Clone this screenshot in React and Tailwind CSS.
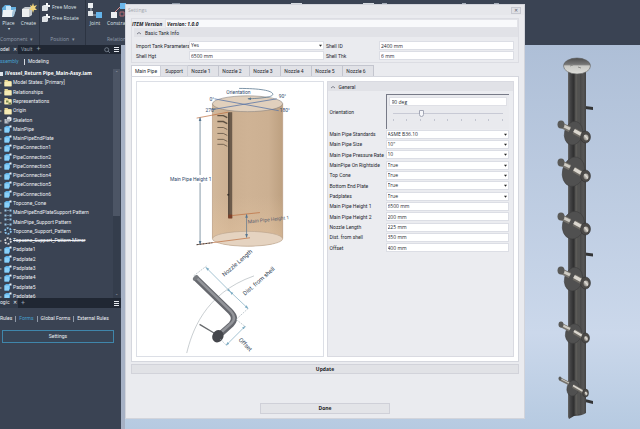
import React from "react";

const treeItems = [
  ["folder", "Model States: [Primary]"],
  ["folder", "Relationships"],
  ["reps", "Representations"],
  ["folder", "Origin"],
  ["skeleton", "Skeleton"],
  ["part", "MainPipe"],
  ["part", "MainPipeEndPlate"],
  ["part", "PipeConnection1"],
  ["part", "PipeConnection2"],
  ["part", "PipeConnection3"],
  ["part", "PipeConnection4"],
  ["part", "PipeConnection5"],
  ["part", "PipeConnection6"],
  ["part", "Topcone_Cone"],
  ["pattern", "MainPipeEndPlateSupport Pattern"],
  ["pattern", "MainPipe_Support Pattern"],
  ["circular", "Topcone_Support_Pattern"],
  ["suppressed", "Topcone_Support_Pattern-Mirror"],
  ["part", "Padplate1"],
  ["part", "Padplate2"],
  ["part", "Padplate3"],
  ["part", "Padplate4"],
  ["part", "Padplate5"],
  ["part", "Padplate6"],
];

const generalFields = [
  ["Main Pipe Standards", "ASME B36.10", true],
  ["Main Pipe Size", '10"', true],
  ["Main Pipe Pressure Rate", "10", true],
  ["MainPipe On Rightside", "True", true],
  ["Top Cone", "True", true],
  ["Bottom End Plate", "True", true],
  ["Padplates", "True", true],
  ["Main Pipe Height 1", "6500 mm", false],
  ["Main Pipe Height 2", "200 mm", false],
  ["Nozzle Length", "225 mm", false],
  ["Dist. from shell", "350 mm", false],
  ["Offset", "400 mm", false],
];

const nozzles = [
  { x: 561, y: 125, dx: 24, dy: 12, rx: 9, ry: 12, s: 6 },
  { x: 561, y: 163, dx: 24, dy: 13, rx: 11, ry: 15, s: 6 },
  { x: 561, y: 217, dx: 24, dy: 12, rx: 11, ry: 14, s: 6 },
  { x: 561, y: 271, dx: 24, dy: 12, rx: 9, ry: 12, s: 6 },
  { x: 561, y: 325, dx: 24, dy: 13, rx: 8, ry: 10, s: 5 },
  { x: 560, y: 379, dx: 25, dy: 14, rx: 6, ry: 8, s: 4 },
];

function TreeIcon({ kind }) {
  return (
    <svg viewBox="0 0 8 8" className="h-2 w-2 shrink-0">
      {(kind === "folder" || kind === "reps") && (
        <>
          <path d="M0.5 1h3l.8 1h3.2v5.3h-7z" fill="#e8d795" />
          <path d="M0.5 3h7v4.3h-7z" fill="#f6ebb5" />
          {kind === "reps" && <path d="M2 3.5h2.5v2H2zM4.5 5.5H7v2H4.5z" fill="#74834f" />}
        </>
      )}
      {kind === "part" && (
        <>
          <path d="M0.5 2.5L2 1h4v4.5L5 7.5H0.5z" fill="#5aaee6" />
          <path d="M0.5 2.5H5v5H0.5z" fill="#8bd0f8" />
          <path d="M5.500 .5h2V2.500h-2z" fill="#eef4f8" />
        </>
      )}
      {kind === "skeleton" && (
        <>
          <path d="M0.5 3h4v4.5h-4z" fill="#b9bec6" />
          <path d="M3 1.5L5 .5l2.5 1v3L5 6 3 4.5z" fill="#e4e7ea" />
          <path d="M2 4h4M3 6h3" stroke="#59616e" strokeWidth=".7" />
        </>
      )}
      {kind === "pattern" && (
        <path d="M.5 .5h2v2h-2zM5.5 .5h2v2h-2zM.5 5.5h2v2h-2zM5.5 5.5h2v2h-2zM3.5 1h1v1h-1zM3.5 6h1v1h-1z" fill="#9bc7e6" />
      )}
      {(kind === "circular" || kind === "suppressed") && (
        <circle cx="4" cy="4" r="2.9" fill="none" strokeWidth="1.8" strokeDasharray="1.9 1.1" stroke={kind === "circular" ? "#8cc3ea" : "#d6d8db"} />
      )}
    </svg>
  );
}

function Menu() {
  return (
    <svg viewBox="0 0 5 5" className="h-[5px] w-[5px]">
      <path d="M0 .5h5M0 2.5h5M0 4.5h5" stroke="#e4e8ee" />
    </svg>
  );
}

function Ribbon() {
  return (
    <header className="flex h-[45px] shrink-0 overflow-hidden bg-[#3a4353] text-[5px] leading-[8px] text-[#dfe3e9]">
      <section className="flex w-[40px] shrink-0 flex-col justify-between border-r border-[#2c3442]">
        <div className="flex gap-[3px]">
          <button className="flex w-[17px] flex-col items-center">
            <svg viewBox="0 0 16 16" className="mt-[3px] h-4 w-4">
              <path d="M1 5l3-3h5l1 2h5v3L12 14H2z" fill="#64afe0" />
              <path d="M2 7h10l-1 7H1z" fill="#eef3f6" />
              <path d="M5 3h5v4H5z" fill="#c9e6f8" />
              <path d="M12 7l3-1-2 7-2 1z" fill="#a9c5d7" />
            </svg>
            Place
            <span className="text-[4px] leading-[4px]">▾</span>
          </button>
          <button className="flex w-[17px] flex-col items-center">
            <svg viewBox="0 0 16 16" className="mt-[3px] h-4 w-4">
              <path d="M1 6l3-2h7v8l-3 2H1z" fill="#c4c9ce" />
              <path d="M1 6h7v8H1z" fill="#eceeef" />
              <path d="M12 0l1 3 3-1-2 3 2 2-3 0-1 3-1-3-3 0 2-2-1-3 2 1z" fill="#f0d37a" />
            </svg>
            Create
          </button>
        </div>
        <div className="pb-0.5 whitespace-nowrap text-[#929cab]">Component &nbsp;▾</div>
      </section>
      <section className="flex w-[46px] shrink-0 flex-col justify-between border-r border-[#2c3442]">
        <div className="flex flex-col gap-[3px] pt-[3px] pl-0.5">
          {["Free Move", "Free Rotate"].map((t) => (
            <button key={t} className="flex items-center gap-0.5 whitespace-nowrap">
              <svg viewBox="0 0 8 8" className="h-2 w-2 shrink-0">
                <path d="M0 3l2-1h4v5l-1 1H0z" fill="#dfe3e7" />
                <path d="M4 0h2v2h2v2H6V3H4z" fill="#f8fafb" />
              </svg>
              {t}
            </button>
          ))}
        </div>
        <div className="pb-0.5 text-center text-[#929cab]">Position &nbsp;▾</div>
      </section>
      <section className="flex w-[86px] shrink-0 flex-col justify-between overflow-hidden">
        <div className="flex gap-1 pt-[3px] pl-px">
          <button className="flex flex-col items-center">
            <svg viewBox="0 0 16 16" className="h-4 w-4">
              <path d="M4 5v7h7" fill="none" stroke="#aeb9c6" />
              <path d="M1 0h5v5H1z" fill="#eceff2" />
              <path d="M9 9h6v6H9z" fill="#64b4ea" />
              <path d="M1 8h5v5H1z" fill="#dfe3e7" />
            </svg>
            Joint
          </button>
          <button className="flex flex-col items-center">
            <svg viewBox="0 0 16 16" className="h-4 w-4">
              <path d="M4 10l7-7" stroke="#d68b8b" />
              <path d="M10 0h6v6h-6z" fill="#6ab6ea" />
              <path d="M1 9h6v6H1z" fill="#eceff2" />
              <path d="M10 9h4v4h-4z" fill="none" stroke="#b46b73" />
            </svg>
            Constrain
          </button>
        </div>
        <div className="pb-0.5 pl-[21px] text-[#929cab]">Relationships ▾</div>
      </section>
      <div className="flex items-start pt-[3px]">
        <span className="h-4 w-2 bg-[#8d97a5]" />
        <span className="ml-[111px] h-4 w-[11px] bg-[#d5dae0]" />
        <span className="ml-[61px] h-4 w-[11px] bg-[#d5dae0]" />
        <span className="ml-2 h-4 w-[5px] bg-[#a5adb9]" />
        <span className="ml-[75px] h-4 w-1 bg-[#a5adb9]" />
        <span className="ml-[28px] h-4 w-[5px] bg-[#a5adb9]" />
      </div>
    </header>
  );
}

function ModelBrowser() {
  return (
    <aside className="flex w-[121px] shrink-0 flex-col overflow-hidden bg-[#3a4353] font-[Roboto,sans-serif] text-[#eef0f4]">
      <div className="flex h-[9px] shrink-0 items-center bg-[#202733] text-[5px]">
        <span className="flex h-full w-[18px] items-center gap-[3px] bg-[#313a49]">
          <span>odel</span><span>✕</span>
        </span>
        <span className="pl-[3px] text-[#98a2b0]">Vault</span>
        <span className="flex-1 pl-1 text-[7px] text-[#98a2b0]">+</span>
        <svg viewBox="0 0 6 6" className="mr-1 h-1.5 w-1.5"><circle cx="2.7" cy="2.7" r="2" fill="none" stroke="#8b96a5" strokeWidth=".7" /><path d="M4 4l2 2" stroke="#8b96a5" strokeWidth=".7" /></svg>
        <span className="pr-[2px]"><Menu /></span>
      </div>
      <nav className="flex h-[15px] shrink-0 items-center text-[5px]">
        <a href="#assembly" className="w-[21px] overflow-hidden text-[#45a0cf] underline underline-offset-2">ssembly</a>
        <span className="mx-[3px] h-[6px] w-px bg-[#d5dae1]" />
        <a href="#modeling">Modeling</a>
      </nav>
      <div className="flex h-[229px] shrink-0 overflow-hidden">
        <ul className="grid h-[232px] flex-1 grid-rows-[repeat(25,minmax(0,1fr))] text-[5px] leading-[9px] whitespace-nowrap">
          <li className="flex items-center gap-0.5 font-['Open_Sans',sans-serif] font-bold text-white">
            <span className="h-1 w-[3px] bg-[#dfe3e9]" />iVessel_Return Pipe_Main-Assy.iam
          </li>
          {treeItems.map(([kind, name]) => (
            <li key={name} className="flex items-center gap-px">
              <span className="w-[3px] text-[4px] text-[#a0a9b6]">▸</span>
              <TreeIcon kind={kind} />
              <span className={kind === "suppressed" ? "line-through" : ""}>{name}</span>
            </li>
          ))}
        </ul>
        <div className="mr-px flex w-[7px] flex-col items-center justify-between bg-[#343d4c] text-[4px] leading-[8px]">
          <span className="flex h-[147px] w-full justify-center bg-[#4c5565] text-[#aab2be]">⌃</span>
          <span className="text-[#aab2be]">⌄</span>
        </div>
      </div>
      <div className="flex h-[10px] shrink-0 items-center bg-[#202733] text-[5px]">
        <span className="flex h-full w-[18px] items-center gap-[3px] bg-[#313a49]"><span>ogic</span><span>✕</span></span>
        <span className="flex-1 pl-[3px] text-[7px] text-[#98a2b0]">+</span>
        <span className="pr-[2px]"><Menu /></span>
      </div>
      <nav className="flex h-[22px] shrink-0 items-center text-[5px] whitespace-nowrap">
        <a href="#rules">Rules</a>
        <span className="mx-[3px] h-[6px] w-px bg-[#8f99a8]" />
        <a href="#forms" className="text-[#45a0cf]">Forms</a>
        <span className="mx-[3px] h-[6px] w-px bg-[#8f99a8]" />
        <a href="#global">Global Forms</a>
        <span className="mx-[3px] h-[6px] w-px bg-[#8f99a8]" />
        <a href="#external">External Rules</a>
      </nav>
      <button className="mr-[7px] ml-0.5 h-[13px] shrink-0 border border-[#3f86ab] bg-[#384556] text-[5px] leading-[11px]">Settings</button>
    </aside>
  );
}

function Vessel() {
  return (
    <svg viewBox="525 45 115 384" className="h-[384px] w-[115px] shrink-0">
      <defs>
        <linearGradient id="tube">
          <stop offset="0" stopColor="#686868" /><stop offset=".1" stopColor="#484849" /><stop offset=".3" stopColor="#303031" />
          <stop offset=".5" stopColor="#5a5956" /><stop offset=".6" stopColor="#434343" /><stop offset=".85" stopColor="#555" /><stop offset="1" stopColor="#434344" />
        </linearGradient>
        <linearGradient id="cap" x2="0" y2="1">
          <stop offset="0" stopColor="#4d4d4d" /><stop offset=".4" stopColor="#777" /><stop offset=".5" stopColor="#c9c9c5" /><stop offset="1" stopColor="#dededa" />
        </linearGradient>
        <linearGradient id="steel" x1="1" x2="0" y2="1">
          <stop offset="0" stopColor="#77736d" /><stop offset=".45" stopColor="#dedbd4" /><stop offset="1" stopColor="#55524e" />
        </linearGradient>
      </defs>
      <path d="M585 106l8 1v3l-8-1zM585 252.500l8 1v3l-8-1zM585 399l8 2v3l-8-2z" fill="#343536" />
      <path d="M568 71h18v342q-4 3-12 3l-5 3-1-2z" fill="url(#tube)" />
      <path d="M576 72v342M579 72v342" stroke="#706f6c" strokeWidth=".6" />
      <ellipse cx="577" cy="66" rx="13.500" ry="8" fill="url(#cap)" stroke="#5e5f60" strokeWidth=".6" />
      <path d="M570 66l3-1M578 67l3 1" stroke="#8c8c89" />
      {nozzles.map((n) => (
        <g key={n.y}>
          <ellipse cx={n.x + n.dx / 2 + 1} cy={n.y + n.dy / 2 + 2} rx={n.rx} ry={n.ry} transform={`rotate(14 ${n.x + n.dx / 2} ${n.y + n.dy / 2})`} fill="#505050" stroke="#3c3c3c" strokeWidth=".5" />
          <path d={`M${n.x} ${n.y}l9 4.500`} stroke="#77746e" strokeWidth={n.s - 0.5} />
          <path d={`M${n.x + 1} ${n.y}l8 4`} stroke="#cfccc4" strokeWidth={n.s - 3} />
          <ellipse cx={n.x} cy={n.y - 0.5} rx={n.s - 2.5} ry={n.s - 2} fill="#5a5a58" />
          <path d={`M${n.x + 13} ${n.y + n.dy / 2}L${n.x + n.dx} ${n.y + n.dy}`} stroke="#6d6a64" strokeWidth={n.s} />
          <path d={`M${n.x + 13} ${n.y + n.dy / 2 - 0.5}L${n.x + n.dx} ${n.y + n.dy - 0.5}`} stroke="#dbd7cf" strokeWidth={n.s - 2.5} />
          <ellipse cx={n.x + n.dx + 0.5} cy={n.y + n.dy} rx={n.s - 1} ry={n.s} fill="#4c4a48" stroke="#2f2f2f" strokeWidth=".5" />
          <ellipse cx={n.x + n.dx + 1} cy={n.y + n.dy + 0.5} rx={n.s / 2 - 0.5} ry={n.s / 2} fill="url(#steel)" />
        </g>
      ))}
    </svg>
  );
}

function TankDrawing() {
  return (
    <svg viewBox="137 80 187 277" className="h-full w-full" fontFamily="Roboto, sans-serif">
      <defs>
        <linearGradient id="shell">
          <stop offset="0" stopColor="#d2b89b" /><stop offset=".25" stopColor="#cbaf91" /><stop offset=".5" stopColor="#cfb395" /><stop offset=".8" stopColor="#ccb092" /><stop offset="1" stopColor="#bda080" />
        </linearGradient>
        <linearGradient id="fade" x2="0" y2="1">
          <stop offset="0" stopColor="#e6c6a2" stopOpacity="0" /><stop offset="1" stopColor="#e6c6a2" stopOpacity=".6" />
        </linearGradient>
        <marker id="arrow" viewBox="0 0 6 6" refX="5" refY="3" markerWidth="5" markerHeight="5" orient="auto-start-reverse">
          <path d="M0 1l6 2-6 2z" fill="#55748f" />
        </marker>
        <marker id="tip" viewBox="0 0 6 6" refX="5" refY="3" markerWidth="5" markerHeight="5" orient="auto-start-reverse">
          <path d="M0 1l6 2-6 2z" fill="#7faec5" />
        </marker>
      </defs>
      <path d="M213 102v136a35.500 8 0 0 0 71 0V102z" fill="url(#shell)" />
      <path d="M213 195v43a35.500 8 0 0 0 71 0v-43z" fill="url(#fade)" />
      <path d="M213 102v136M284 102v136" stroke="#b39375" strokeWidth=".6" />
      <ellipse cx="248.500" cy="238.500" rx="35.500" ry="7.500" fill="#e5d3c0" stroke="#b7a28c" strokeWidth=".6" />
      <ellipse cx="248.500" cy="102" rx="35.500" ry="8" fill="#e1d0bd" stroke="#8a8581" strokeWidth=".6" />
      <path d="M215 97l65 12M212 108l66-11" stroke="#5b76a6" strokeWidth=".8" />
      <path d="M240 86.500c20 0 34 2 34 6 0 3-13 4-25 4.500" fill="none" stroke="#5b7890" strokeWidth=".8" markerEnd="url(#arrow)" />
      <path d="M229 110.500h4v107h-4z" fill="#6c5b4b" />
      <path d="M229.500 111v106" stroke="#4a4037" />
      <path d="M229 214h4v4h-4z" fill="#7d4129" />
      {[114, 120, 126, 132, 138, 143].map((y) => (
        <path key={y} d={`M218 ${y}h6l4 2`} stroke="#5f5142" fill="none" strokeWidth={y < 121 ? 1.4 : 0.8} />
      ))}
      <circle cx="229" cy="194" r="1" fill="#37302a" />
      <path d="M197 116.500l32-6M233 215l28-3M197 244.500l54-7" stroke="#bd6d3d" strokeWidth=".7" />
      <path d="M197 244.500l16-2" stroke="#3d4044" strokeDasharray="2 1" />
      <path d="M200.500 116v128" stroke="#667e90" strokeWidth=".8" markerStart="url(#arrow)" markerEnd="url(#arrow)" />
      <path d="M247.500 214v23" stroke="#667e90" strokeWidth=".8" markerStart="url(#arrow)" markerEnd="url(#arrow)" />
      <rect x="169" y="174" width="43" height="8" fill="#fff" />
      <g fill="#2f4a6c" fontSize="5">
        <text x="170" y="180">Main Pipe Height 1</text>
        <text x="227" y="92">Orientation</text>
        <text x="210" y="99">0°</text>
        <text x="280" y="96">90°</text>
        <text x="206" y="110">270°</text>
        <text x="281" y="110">180°</text>
        <text x="249" y="223" transform="rotate(-6 249 223)" fill="#5b5f70">Main Pipe Height 1</text>
      </g>
      <path d="M187 354C192 334 204 294 255 276" fill="none" stroke="#bac1c5" strokeWidth=".8" />
      <path d="M200 325l15 9" stroke="#66696c" strokeWidth="1.300" />
      <path d="M196 278l35 34q7 7 1 13l-10 9" fill="none" stroke="#66686e" strokeWidth="6" />
      <path d="M196.500 277.500l35 34q6 7 1 12l-10 9" fill="none" stroke="#93959a" strokeWidth="2.500" />
      <ellipse cx="196" cy="278" rx="3.300" ry="2" transform="rotate(-45 196 278)" fill="#777a7f" />
      <ellipse cx="218.500" cy="337" rx="5.500" ry="6.500" transform="rotate(30 218.500 337)" fill="#45474c" />
      <path d="M194 276l13-10M237 320l12-11M237 320l10 8M221 340l7 7" stroke="#a7b4bb" strokeWidth=".7" strokeDasharray="2 1" />
      <g stroke="#8bb3c6" strokeWidth=".8">
        <path d="M206.500 267.500L231 292" markerStart="url(#tip)" markerEnd="url(#tip)" />
        <path d="M231 292l18 17" markerStart="url(#tip)" markerEnd="url(#tip)" />
        <path d="M227 346l19-19" markerStart="url(#tip)" markerEnd="url(#tip)" />
      </g>
      <g fill="#344454" fontSize="6">
        <text x="225" y="277" transform="rotate(-41 225 277)">Nozzle Length</text>
        <text x="246" y="296" transform="rotate(-41 246 296)">Dist. from shell</text>
        <text x="239" y="341" transform="rotate(45 239 341)">Offset</text>
      </g>
    </svg>
  );
}

function Field({ id, label, value, select, labelClass }) {
  const box = "block h-[9px] w-full appearance-none rounded-none border border-[#dcdee5] bg-white px-px font-['Open_Sans',sans-serif] text-[5px] leading-[7px] text-[#25272e] outline-none";
  return (
    <div className="flex items-center">
      <label htmlFor={id} className={`shrink-0 whitespace-nowrap ${labelClass}`}>{label}</label>
      <div className="relative min-w-0 flex-1">
        {select ? (
          <>
            <select id={id} defaultValue={value} className={box}>
              <option>{value}</option>
            </select>
            <svg viewBox="0 0 4 4" className="pointer-events-none absolute top-[3px] right-[2px] h-[3px] w-[3px]"><path d="M0 1h4L2 3.500z" fill="#222" /></svg>
          </>
        ) : (
          <input id={id} type="text" defaultValue={value} className={box} />
        )}
      </div>
    </div>
  );
}

function Collapse({ children }) {
  return (
    <div className="flex h-[9px] shrink-0 items-center gap-1 bg-[#e1e2e7] px-[3px]">
      <svg viewBox="0 0 4 4" className="h-1 w-1"><path d="M0 3l2-1.500L4 3" fill="none" stroke="#666a75" strokeWidth=".8" /></svg>
      {children}
    </div>
  );
}

function SettingsDialog() {
  return (
    <div role="dialog" aria-label="Settings" className="absolute top-1 right-[115px] bottom-[10px] left-[125px] flex flex-col border border-[#d2d4db] bg-[#eaebef] font-[Roboto,sans-serif] text-[5px] leading-[8px] text-[#25272e]">
      <div className="flex h-[10px] shrink-0 items-center justify-between bg-[#e6e7eb] pr-[3px] pl-0.5 font-['Open_Sans',sans-serif] text-[#a3a5ac]">
        Settings
        <button aria-label="Close" className="h-[7px] w-[10px] border border-[#c6c8d0] bg-[#dfe0e5] text-[5px] leading-[5px] text-[#5d606b]">✕</button>
      </div>
      <div className="flex min-h-0 flex-1 flex-col px-[5px] pt-[3px] pb-1">
        <section className="h-[45px] shrink-0 border border-[#dcdde3]">
          <div className="flex h-[9px] items-center font-['Open_Sans',sans-serif] font-bold text-[#23242a] italic">
            <label htmlFor="version" className="w-[33px] shrink-0 whitespace-nowrap">ITEM Version</label>
            <input id="version" readOnly defaultValue="Version: 1.0.0" className="h-[9px] min-w-0 flex-1 border border-[#e2e3e8] bg-[#f8f9fb] px-px text-[5px] leading-[7px] font-bold italic outline-none" />
          </div>
          <div className="pl-[2px]"><Collapse>Basic Tank Info</Collapse></div>
          <div className="grid grid-cols-2 gap-x-0.5 gap-y-px pt-1 pr-1 pl-1">
            <Field id="import" label="Import Tank Parameters" value="Yes" select labelClass="w-[53px]" />
            <Field id="shellid" label="Shell ID" value="2400 mm" labelClass="w-[53px]" />
            <Field id="shellhgt" label="Shell Hgt" value="6500 mm" labelClass="w-[53px]" />
            <Field id="shellthk" label="Shell Thk" value="6 mm" labelClass="w-[53px]" />
          </div>
        </section>
        <div role="tablist" className="mt-0.5 flex h-[11px] shrink-0">
          <button role="tab" aria-selected="true" className="w-[30px] border border-b-0 border-[#cfd1d9] bg-white">Main Pipe</button>
          <button role="tab" aria-selected="false" className="w-[27px] border-t border-r border-[#cfd1d9] bg-[#e1e2e7]">Support</button>
          {[1, 2, 3, 4, 5, 6].map((n) => (
            <button key={n} role="tab" aria-selected="false" className="w-[31px] border-t border-r border-[#c3c5ce] bg-[#e1e2e7] pr-1">Nozzle {n}</button>
          ))}
        </div>
        <div className="flex min-h-0 flex-1 gap-[3px] border border-[#d5d7de] bg-white px-1 py-1">
          <div className="min-w-0 flex-1 overflow-hidden border border-[#dcdfe6]"><TankDrawing /></div>
          <section className="min-w-0 flex-1 border border-[#d9dae1] bg-[#ebecf0]">
            <Collapse>General</Collapse>
            <div className="flex items-center pt-[3px] pr-1 pl-0.5">
              <label htmlFor="orientation" className="w-[56px] shrink-0">Orientation</label>
              <div className="h-[35px] min-w-0 flex-1 border-t border-l border-[#777a87] bg-[#e9eaee] px-0.5 pt-0.5">
                <input aria-label="Orientation value" defaultValue="90 deg" className="block h-[9px] w-full border border-[#dfe0e6] bg-white px-0.5 font-['Open_Sans',sans-serif] text-[5px] leading-[7px] outline-none" />
                <input
                  id="orientation"
                  type="range"
                  min="0"
                  max="360"
                  defaultValue="90"
                  className="mt-1 block h-[7px] w-full appearance-none bg-transparent px-1 [&::-webkit-slider-runnable-track]:h-px [&::-webkit-slider-runnable-track]:bg-[#c8cad5] [&::-webkit-slider-thumb]:-mt-[3px] [&::-webkit-slider-thumb]:h-[7px] [&::-webkit-slider-thumb]:w-[5px] [&::-webkit-slider-thumb]:appearance-none [&::-webkit-slider-thumb]:rounded-b-sm [&::-webkit-slider-thumb]:border [&::-webkit-slider-thumb]:border-[#a2a6b5] [&::-webkit-slider-thumb]:bg-[#f6f7fa]"
                />
                <div className="mt-0.5 flex justify-between px-1">
                  {[0, 1, 2, 3, 4, 5, 6, 7, 8].map((t) => <span key={t} className="h-0.5 w-px bg-[#c2c5d0]" />)}
                </div>
              </div>
            </div>
            <div className="grid h-[124px] grid-rows-[repeat(12,minmax(0,1fr))] pr-1 pl-0.5">
              {generalFields.map(([label, value, select], i) => (
                <Field key={label} id={`g${i}`} label={label} value={value} select={select} labelClass="w-[56px]" />
              ))}
            </div>
          </section>
        </div>
        <button className="mt-0.5 h-[10px] shrink-0 border border-[#d2d3da] bg-[#e1e2e6] font-['Open_Sans',sans-serif] leading-[8px] font-bold text-[#1d1f27]">Update</button>
        <button className="mt-[29px] h-[11px] w-1/3 shrink-0 self-center border border-[#cfd0d8] bg-[#e3e4e8] font-['Open_Sans',sans-serif] leading-[9px] font-bold text-[#1d1f27]">Done</button>
      </div>
    </div>
  );
}

export default function App() {
  return (
    <div className="relative flex h-screen min-h-[429px] flex-col overflow-hidden bg-[#3a4353] font-['Open_Sans',sans-serif]">
      <Ribbon />
      <div className="flex min-h-0 flex-1">
        <ModelBrowser />
        <main className="flex flex-1 justify-end border-l-4 border-[#a6b1c5] bg-linear-to-b from-[#aebfd7] via-[#cbd8eb] via-75% to-[#b6cae1]">
          <Vessel />
        </main>
      </div>
      <SettingsDialog />
    </div>
  );
}
